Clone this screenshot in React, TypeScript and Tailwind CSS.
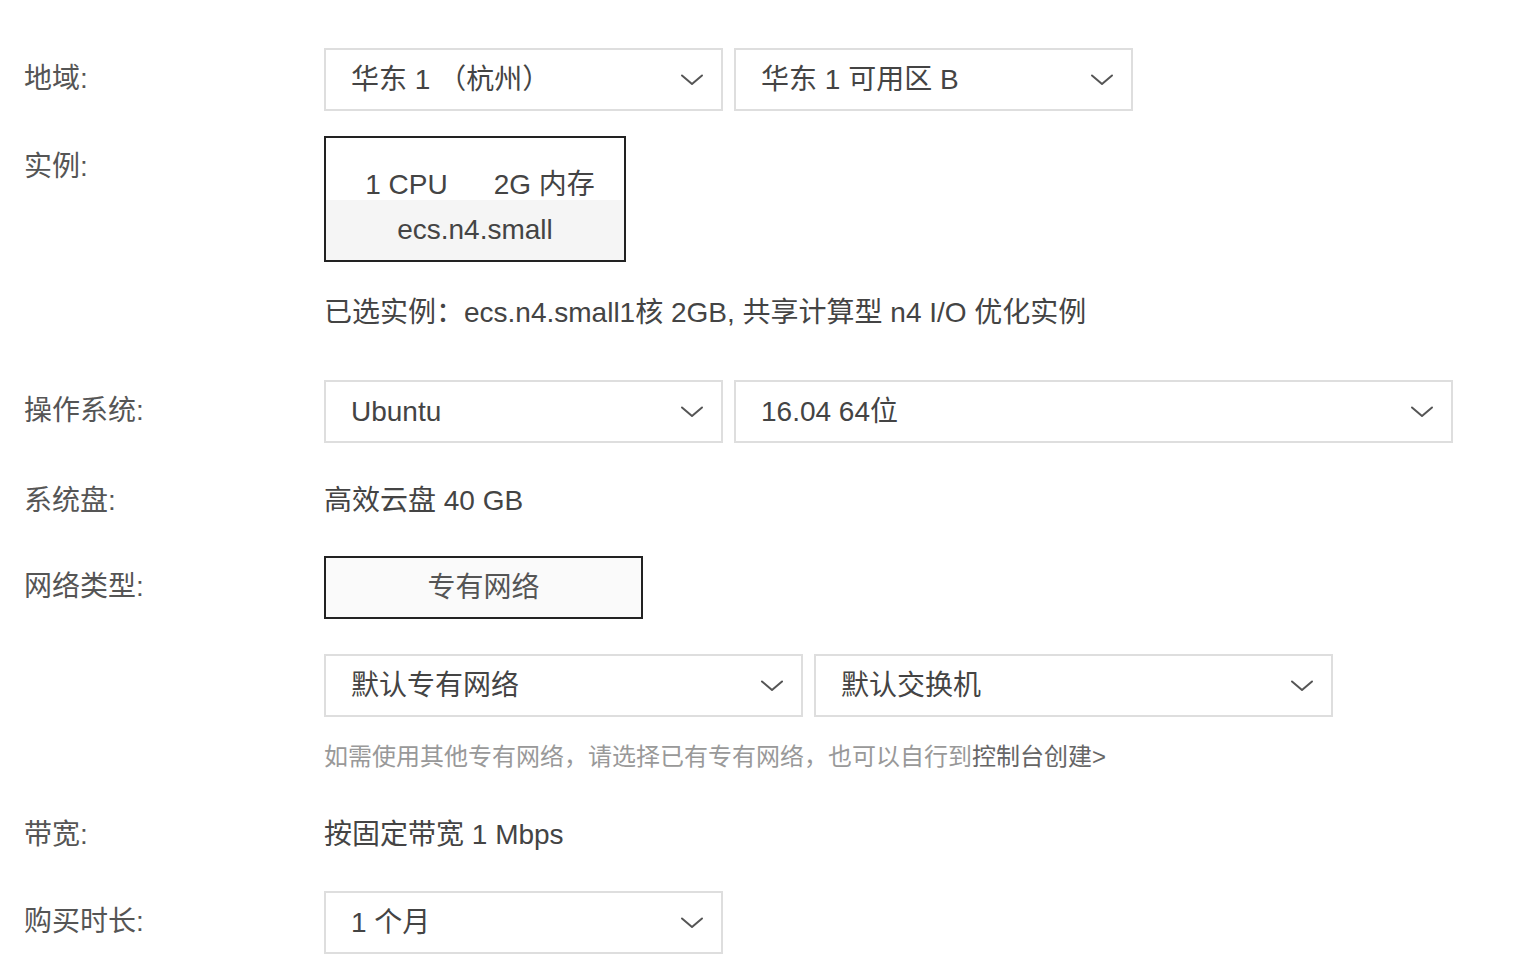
import React from 'react';

const font = { fontFamily: '"Liberation Sans", "Noto Sans CJK SC", sans-serif' };

function Chevron() {
  return (
    <svg width="24" height="14" viewBox="0 0 24 14" fill="none" className="shrink-0">
      <path d="M2 2.5 L12 11 L22 2.5" stroke="#555" strokeWidth="2" strokeLinecap="round" strokeLinejoin="round" />
    </svg>
  );
}

function Select({ value, width }: { value: string; width: string }) {
  return (
    <div className={`${width} h-[63px] border-2 border-[#dedede] bg-white flex items-center justify-between pl-[25px] pr-[17px]`}>
      <span className="text-[28px] leading-none text-[#444]">{value}</span>
      <Chevron />
    </div>
  );
}

function Label({ children }: { children: React.ReactNode }) {
  return <div className="w-[300px] shrink-0 pt-[15px] text-[28px] leading-[32px] text-[#555]">{children}</div>;
}

export default function App() {
  return (
    <div className="min-h-screen bg-white pl-[24px] pt-[48px]" style={font}>
      {/* 地域 */}
      <div className="flex">
        <Label>地域:</Label>
        <div className="flex gap-[11px]">
          <Select value="华东 1 （杭州）" width="w-[399px]" />
          <Select value="华东 1 可用区 B" width="w-[399px]" />
        </div>
      </div>

      {/* 实例 */}
      <div className="flex mt-[25px]">
        <Label>实例:</Label>
        <div className="flex flex-col">
          <div className="w-[302px] h-[126px] border-2 border-[#222] flex flex-col">
            <div className="h-[62px] bg-white flex items-end justify-center gap-[46px] pl-[10px] pb-[1px] text-[28px] leading-none text-[#444]">
              <span>1 CPU</span>
              <span>2G 内存</span>
            </div>
            <div className="flex-1 bg-[#f5f5f5] flex items-center justify-center text-[28px] text-[#444] leading-none">
              ecs.n4.small
            </div>
          </div>
          <div className="mt-[33px] text-[28px] leading-[36px] text-[#444]">
            已选实例：ecs.n4.small1核 2GB, 共享计算型 n4 I/O 优化实例
          </div>
        </div>
      </div>

      {/* 操作系统 */}
      <div className="flex mt-[49px]">
        <Label>操作系统:</Label>
        <div className="flex gap-[11px]">
          <Select value="Ubuntu" width="w-[399px]" />
          <Select value="16.04 64位" width="w-[719px]" />
        </div>
      </div>

      {/* 系统盘 */}
      <div className="flex mt-[27px]">
        <Label>系统盘:</Label>
        <div className="pt-[13px] text-[28px] leading-[36px] text-[#444]">高效云盘 40 GB</div>
      </div>

      {/* 网络类型 */}
      <div className="flex mt-[37px]">
        <Label>网络类型:</Label>
        <div className="flex flex-col">
          <div className="w-[319px] h-[63px] border-2 border-[#222] bg-[#fafafa] flex items-center justify-center text-[28px] text-[#555]">
            专有网络
          </div>
          <div className="flex gap-[11px] mt-[35px]">
            <Select value="默认专有网络" width="w-[479px]" />
            <Select value="默认交换机" width="w-[519px]" />
          </div>
          <div className="mt-[24px] text-[24px] leading-[32px] text-[#999]">
            如需使用其他专有网络，请选择已有专有网络，也可以自行到<span className="text-[#666]">控制台创建&gt;</span>
          </div>
        </div>
      </div>

      {/* 带宽 */}
      <div className="flex mt-[31px]">
        <Label>带宽:</Label>
        <div className="pt-[13px] text-[28px] leading-[36px] text-[#444]">按固定带宽 1 Mbps</div>
      </div>

      {/* 购买时长 */}
      <div className="flex mt-[38px]">
        <Label>购买时长:</Label>
        <Select value="1 个月" width="w-[399px]" />
      </div>
    </div>
  );
}
